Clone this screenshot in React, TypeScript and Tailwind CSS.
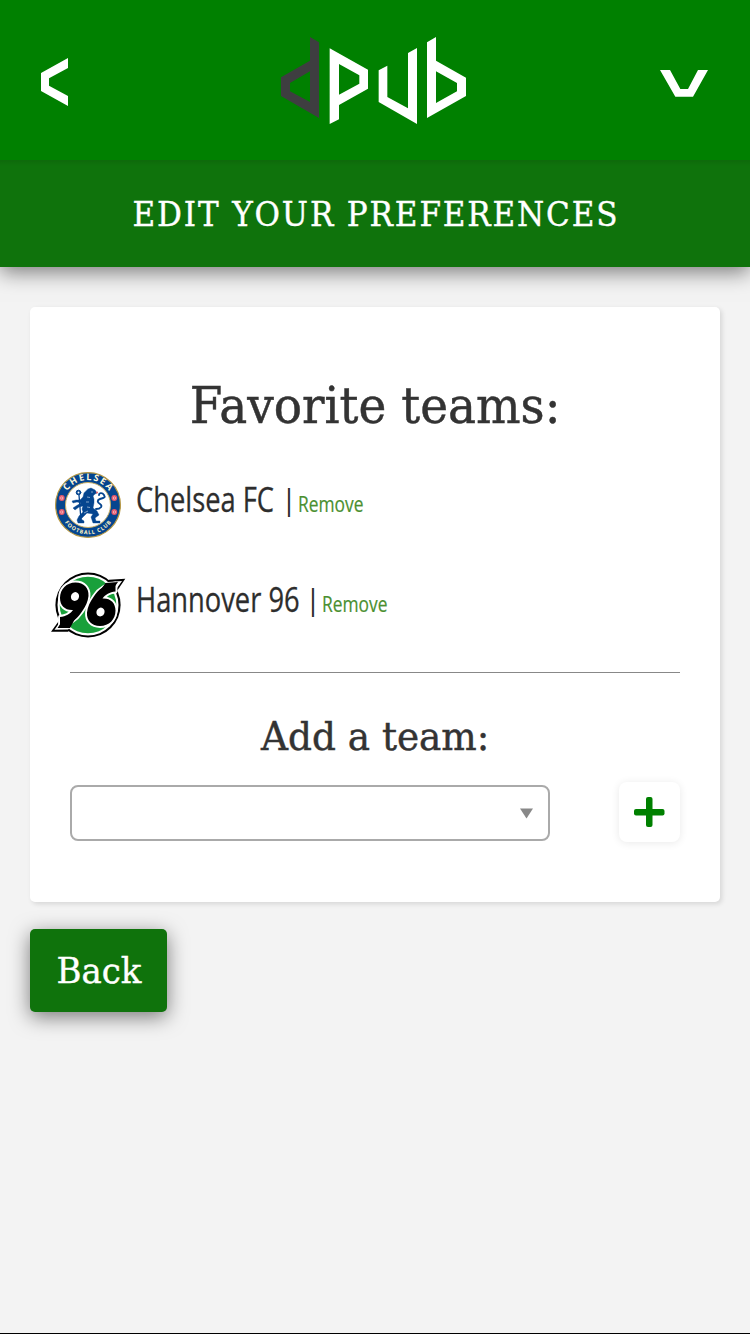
import React from "react";

const slab = "font-['DejaVu_Serif',serif] whitespace-nowrap inline-block";
const sans = "font-['Open_Sans',sans-serif] whitespace-nowrap inline-block origin-left";

function Logo() {
  return (
    <svg width="210" height="110" viewBox="0 0 630 330">
      <path fillRule="evenodd" fill="#3e3e40" d="M120 36L147 52V279L33 213V157L120 107ZM120 139L60 174V199L120 231Z" />
      <path fillRule="evenodd" fill="#fff" d="M179 70L294 134V191L207 240V283L179 297ZM207 117V209L268 176V151Z" />
      <path fill="#fff" d="M326 136L352 122V216L414 250V84L441 69V297L326 231Z" />
      <path fillRule="evenodd" fill="#fff" d="M471 52L498 36V107L588 158V213L471 279ZM498 139V234L561 199V174Z" />
    </svg>
  );
}

function ChelseaCrest() {
  const roses = [[13.8, 30], [13.8, 44], [66.3, 30], [66.3, 44]];
  return (
    <svg width="80" height="74" viewBox="0 0 80 74">
      <defs>
        <path id="arcTop" d="M15 37A25 25 0 0 1 65 37" />
        <path id="arcBottom" d="M10.8 37A29.2 29.2 0 0 0 69.2 37" />
      </defs>
      <circle cx="40" cy="37" r="32.4" fill="#05458f" stroke="#b99a45" strokeWidth="1.2" />
      <circle cx="40" cy="37" r="22.5" fill="#fff" stroke="#c9ad62" strokeWidth="1" />
      <text fill="#fff8dc" fontSize="9" fontWeight="700" fontFamily="Open Sans, sans-serif" textAnchor="middle">
        <textPath href="#arcTop" startOffset="50%" textLength="49">CHELSEA</textPath>
      </text>
      <text fill="#fff3c4" fontSize="5.4" fontWeight="700" fontFamily="Open Sans, sans-serif" textAnchor="middle">
        <textPath href="#arcBottom" startOffset="50%" textLength="54">FOOTBALL CLUB</textPath>
      </text>
      {roses.map(([x, y], i) => (
        <g key={i} transform={`translate(${x} ${y})`}>
          <circle r="2.9" fill="#e4566a" />
          <circle r="1.5" fill="#f7c9cd" />
          <circle r=".7" fill="#d83044" />
        </g>
      ))}
      <g fill="#05458f" stroke="#05458f" strokeLinejoin="round" strokeLinecap="round">
        <path strokeWidth=".4" d="M40 21l3-1 4 2 2 3-2 1-2 2 1 3 0 4-1 5 4 3 2 4-4 3 1 3h4v2h-7l-2-6 2-3-6-1-3 3-3 3 3 2v2h-6l-1-3 2-4 4-4-1-3 1-3-4 1-4 3-2-2 3-2 5-3-4-1-4 1-1-2 4-1 4 0 3-3 1-4z" />
        <path fill="none" strokeWidth="1.9" d="M48 41c5 0 7-3 4-5s-3-4 0-5 6-1 4-4-5-2-5 0" />
        <path fill="none" strokeWidth="1.3" d="M31 27L33 52" />
        <circle cx="30.5" cy="24.5" r="2.3" />
      </g>
      <circle cx="30.5" cy="24.5" r="1" fill="#fff" />
      <path stroke="#fff" strokeWidth=".5" fill="none" d="M39 29l3 .5M38 34l3 0M39 39l3 .5M43 24l2 0M36 45l4-2" />
      <circle cx="49" cy="24.5" r="1" fill="#e35a68" />
    </svg>
  );
}

const nine =
  "M27.5 14.5C36 14.5 41 20 40.5 28C40 33.5 37.5 38.5 34 43.5C29 51 23 56.5 12 57V49C18 48.5 22 46 25 42C17 42.5 12 37.5 12 30C12 21 18.5 14.5 27.5 14.5Z";

function HannoverCrest() {
  return (
    <svg width="80" height="74" viewBox="0 0 80 74">
      <circle cx="40" cy="37" r="32.6" fill="#000" />
      <path d="M3 63.8L13 50L61 11.8L77.3 10.7L67 26L20 63.8Z" fill="#000" />
      <circle cx="40" cy="37" r="30.5" fill="#fff" />
      <path d="M6.5 61.8L14 51L60 14L74 13L65.5 25L20 61.5Z" fill="#fff" />
      <circle cx="40" cy="37" r="28.3" fill="#19a03b" />
      <g fill="#fff" stroke="#fff" strokeWidth="3.8" strokeLinejoin="round">
        <path d={nine} />
        <path transform="rotate(180 39.75 36.25)" d={nine} />
      </g>
      <path d="M9.5 60L14.5 52.5L28 49L22 60ZM70 14L65 21L51 24L57.5 15Z" fill="#000" />
      <g fill="#000">
        <path d={nine} />
        <path transform="rotate(180 39.75 36.25)" d={nine} />
      </g>
      <ellipse cx="27" cy="28.5" rx="4" ry="4.5" transform="rotate(25 27 28.5)" fill="#fff" />
      <ellipse cx="52.5" cy="44" rx="4" ry="4.5" transform="rotate(25 52.5 44)" fill="#fff" />
    </svg>
  );
}

function TeamRow({ crest, name, nameClass }: { crest: React.ReactNode; name: string; nameClass: string }) {
  return (
    <div className="flex h-[100px] items-start pl-[18px]">
      {crest}
      <div className="-mt-px flex h-[64px] items-baseline pl-2 text-[#2d2d2d]">
        <span className={nameClass}>
          <span className={`${sans} scale-x-[0.78] text-[35px] leading-[64px] [-webkit-text-stroke:0.3px_#2d2d2d]`}>{name}</span>
        </span>
        <span className={`${sans} w-[17px] -translate-y-0.5 text-[29px] leading-[64px]`}>|</span>
        <a href="#" className={`${sans} scale-x-[0.79] text-[22px] leading-[64px] text-[#4a8f30] [-webkit-text-stroke:0.2px_#4a8f30]`}>Remove</a>
      </div>
    </div>
  );
}

export default function App() {
  return (
    <div className="flex h-[1334px] w-[750px] flex-col border-b border-black bg-[#f3f3f3]">
      <header className="shadow-[0_5px_20px_rgba(0,0,0,0.5)]">
        <div className="flex h-40 items-start justify-between bg-[#008000] px-5 pt-[25px]">
          <button aria-label="Previous" className="mt-[15px] w-[90px]">
            <svg width="80" height="80" viewBox="0 0 240 240"><path fill="#fff" d="M63 99L144 54V84L87 115V137L144 168V198L63 153Z" /></svg>
          </button>
          <Logo />
          <button aria-label="Menu" className="mt-[25px] w-[90px]">
            <svg width="90" height="60" viewBox="0 0 270 180"><path fill="#fff" d="M60 60H90L121 117H144L174 60H204L159 140H106Z" /></svg>
          </button>
        </div>
        <div className="flex h-[107px] items-center justify-center bg-[#0f730c] bg-[linear-gradient(rgba(0,0,0,0.08),transparent_6px)] pt-0.5 text-white">
          <h1 className={`${slab} scale-x-[0.94] pl-0.5 text-[33px] tracking-[2px] [-webkit-text-stroke:0.4px_#fff]`}>EDIT YOUR PREFERENCES</h1>
        </div>
      </header>
      <main className="px-[30px] pt-10">
        <section className="h-[595px] rounded-[5px] bg-white pt-[60px] text-[#333] shadow-[2px_2px_5px_rgba(0,0,0,0.12)]">
          <h2 className="-mt-px flex h-[80px] items-center justify-center"><span className={`${slab} scale-x-[0.94] text-[50px] [-webkit-text-stroke:0.5px_#333]`}>Favorite teams:</span></h2>
          <div className="mt-[22px] h-[204px]">
            <TeamRow crest={<ChelseaCrest />} name="Chelsea FC" nameClass="w-[145px]" />
            <TeamRow crest={<HannoverCrest />} name="Hannover 96" nameClass="w-[169px]" />
          </div>
          <hr className="mx-10 border-[#888]" />
          <h3 className="mt-[33px] flex h-[60px] items-center justify-center"><span className={`${slab} scale-x-[0.935] text-[40px] [-webkit-text-stroke:0.5px_#333]`}>Add a team:</span></h3>
          <div className="mx-10 mt-4 flex items-start justify-between">
            <button aria-label="Team" className="mt-[3px] flex h-14 w-[480px] items-center justify-end rounded-lg border-2 border-[#aaa] pr-[14px]">
              <svg width="14" height="11" viewBox="0 0 14 11"><path fill="#888" d="M0 0.5H13L6.5 10.5Z" /></svg>
            </button>
            <button aria-label="Add" className="flex h-[60px] w-[61px] items-center justify-center rounded-lg shadow-[0_1px_8px_rgba(0,0,0,0.09)]">
              <svg width="31" height="30" viewBox="0 0 31 30" fill="#008000"><rect x="0" y="12" width="30.5" height="6.5" rx="2" /><rect x="12" y="0" width="6.5" height="30" rx="2" /></svg>
            </button>
          </div>
        </section>
        <button className="mt-[27px] flex h-[83px] w-[137px] items-center justify-center rounded-[5px] bg-[#0f730c] text-white shadow-[0_5px_20px_rgba(0,0,0,0.5)]">
          <span className={`${slab} scale-x-[0.945] text-[36px] [-webkit-text-stroke:0.4px_#fff]`}>Back</span>
        </button>
      </main>
    </div>
  );
}
